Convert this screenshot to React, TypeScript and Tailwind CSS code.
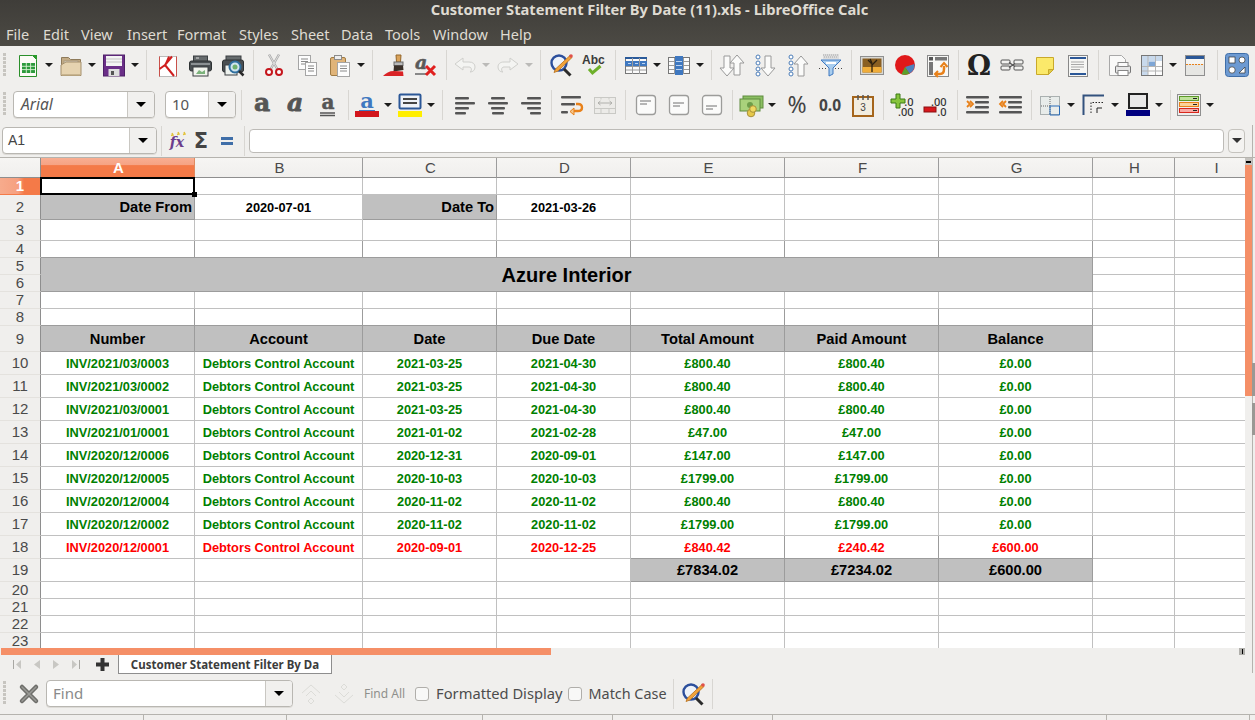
import React from "react";
import clsx from "clsx";

type P = { children?: React.ReactNode };
const Svg = ({ children, w = 24, h = 24 }: P & { w?: number; h?: number }) => (
  <svg className="block overflow-visible" width={w} height={h} viewBox={`0 0 ${w} ${h}`}>
    {children}
  </svg>
);

/* ---------- toolbar 1 icons ---------- */
const NewDoc = () => (
  <Svg>
    <path d="M3.500 2.500h13l4 4v17h-17z" fill="#fbfbf6" stroke="#2a8f2a" />
    <path d="M16 2l5 0 0 5z" fill="#2a9a2a" />
    <rect x="6" y="10" width="13" height="10" fill="#2c9a3c" />
    <path d="M6 13.300h13M6 16.600h13M10.300 10v10M14.600 10v10" stroke="#d9f2d2" strokeWidth=".9" />
  </Svg>
);
const Folder = () => (
  <Svg>
    <path d="M2.500 4.500h7l2 2h10v16h-19z" fill="#c3ab85" stroke="#8e7a5a" />
    <rect x="5" y="8" width="14" height="5" fill="#f6f3ea" stroke="#a79a80" />
    <path d="M2 12l5-3h15v13.500H2z" fill="#e6d3b0" stroke="#a48f6c" />
    <path d="M3 21h18v1.500H3z" fill="#c8b48f" />
  </Svg>
);
const Save = () => (
  <Svg>
    <rect x="1.500" y="2" width="21" height="21" fill="#6b2f88" stroke="#4e2068" />
    <rect x="4" y="3" width="16" height="10" fill="#f4f4f4" />
    <path d="M4 6h16M4 9h16" stroke="#c4c4c4" />
    <rect x="6.500" y="16" width="11" height="7" fill="#dedede" />
    <rect x="9" y="18" width="3" height="4" fill="#555" />
  </Svg>
);
const Pdf = () => (
  <Svg>
    <rect x="4.500" y="3.500" width="17" height="20" fill="#fff" stroke="#bbb" />
    <path d="M4.500 3.500v20M21.500 3.500v20" stroke="#c8504a" />
    <path d="M17 3.500L10 12 4.500 16M10 12l9 11M14 3.500c-2 5-4 9-5 9.500" fill="none" stroke="#cf1f1f" strokeWidth="2" />
  </Svg>
);
const Printer = () => (
  <Svg>
    <rect x="5.500" y="3" width="14" height="6" fill="#666b6d" stroke="#3a3f42" />
    <path d="M8 5h3" stroke="#ddd" />
    <rect x="1.500" y="8" width="22" height="10" rx="2" fill="#4a4f52" stroke="#2d3133" />
    <rect x="5" y="14" width="15" height="9" fill="#f2f4ee" stroke="#3a3f42" />
    <path d="M8 21l3-4 3 2 3-2v4z" fill="#7bb27b" />
    <rect x="3" y="10" width="19" height="2" fill="#8b9093" />
  </Svg>
);
const Preview = () => (
  <Svg>
    <rect x="5" y="3" width="15" height="5" fill="#666b6d" stroke="#3a3f42" />
    <rect x="1.500" y="7" width="21" height="12" rx="2" fill="#4a4f52" stroke="#2d3133" />
    <rect x="4" y="12" width="12" height="10" fill="#eef2ee" stroke="#3a3f42" />
    <circle cx="14" cy="14" r="5.500" fill="#cfe3ee" stroke="#2f6f9f" strokeWidth="2" />
    <circle cx="14" cy="14" r="2.500" fill="#6fb06f" />
    <path d="M18 18l4.500 4.500" stroke="#2a2a2a" strokeWidth="2.500" />
  </Svg>
);
const Cut = () => (
  <Svg>
    <path d="M7 1.500l8 14M17 1.500l-8 14" stroke="#a8a8a8" strokeWidth="2.400" />
    <path d="M7 1.500l8 14M17 1.500l-8 14" stroke="#eee" strokeWidth=".8" />
    <circle cx="7" cy="19" r="3" fill="#fff" stroke="#c5161d" strokeWidth="2" />
    <circle cx="17" cy="19" r="3" fill="#fff" stroke="#c5161d" strokeWidth="2" />
  </Svg>
);
const Copy = () => (
  <Svg>
    <rect x="3.500" y="2.500" width="12" height="14" fill="#fdfdfd" stroke="#a5a5a5" />
    <path d="M6 6h7M6 8.500h7M6 11h7" stroke="#888" />
    <rect x="10.500" y="9.500" width="11" height="13" fill="#fdfdfd" stroke="#a5a5a5" />
    <path d="M13 13h6M13 15.500h6M13 18h6" stroke="#888" />
  </Svg>
);
const Paste = () => (
  <Svg>
    <rect x="2.500" y="4.500" width="15" height="18" rx="1.500" fill="#e0b479" stroke="#a07c45" />
    <rect x="6.500" y="2.500" width="7" height="4" fill="#eee" stroke="#8b8b8b" />
    <rect x="9.500" y="9.500" width="12" height="14" fill="#fdfdfd" stroke="#a5a5a5" />
    <path d="M12 13h7M12 15.500h7M12 18h7" stroke="#8a8a8a" />
  </Svg>
);
const Brush = () => (
  <Svg>
    <path d="M15 2h5l-.5 7h-4z" fill="#d9a25a" stroke="#94662a" />
    <rect x="13" y="9" width="9" height="3.500" fill="#b9b9b9" stroke="#6a6a6a" />
    <path d="M13 12.500h9l.5 4.500-10 1.500z" fill="#3a2f28" />
    <path d="M2 23c3-3 6-5 11-5l9 .5.500 4.500z" fill="#d92326" />
  </Svg>
);
const Clear = () => (
  <Svg>
    <text x="1" y="16" fontFamily="DejaVu Serif" fontWeight="700" fontStyle="italic" fontSize="19" fill="#5a5a5a" stroke="#5a5a5a" strokeWidth=".5">a</text>
    <path d="M1 21h12" stroke="#666" strokeWidth="1.500" />
    <path d="M12 13l9 9M21 13l-9 9" stroke="#e0201f" strokeWidth="3" />
  </Svg>
);
const Undo = () => (
  <Svg>
    <path d="M2 11l8-6v4h6c4 0 6 2 6 5s-2 5-5 5c2-1 2-5-1-5h-6v3z" fill="#f4f4f2" stroke="#cfcfcc" />
  </Svg>
);
const Redo = () => (
  <Svg>
    <path d="M22 11l-8-6v4H8c-4 0-6 2-6 5s2 5 5 5c-2-1-2-5 1-5h6v3z" fill="#f4f4f2" stroke="#cfcfcc" />
  </Svg>
);
const FindIcon = () => (
  <Svg>
    <circle cx="10" cy="10" r="7.500" fill="#eef3fa" stroke="#2c4f9c" strokeWidth="2.400" />
    <path d="M15 16l6.500 6.500" stroke="#2b2b2b" strokeWidth="3" />
    <path d="M21 2.500l2 2L9 18l-4 1.500L6.500 16z" fill="#f2a33a" stroke="#b8701a" strokeWidth=".8" />
    <circle cx="22" cy="3" r="1.800" fill="#e0504a" />
  </Svg>
);
const Spell = () => (
  <Svg>
    <text x="0" y="11" fontFamily="Liberation Sans" fontWeight="700" fontSize="12" fill="#3b3b3b">Abc</text>
    <path d="M7 16l3.500 4 8-7" fill="none" stroke="#6eb02a" strokeWidth="3" />
  </Svg>
);
const TableRow = () => (
  <Svg>
    <rect x="1.500" y="4.500" width="21" height="16" fill="#fbfbfb" stroke="#777" />
    <rect x="1" y="4" width="22" height="2" fill="#2a5a9a" />
    <rect x="1" y="8" width="22" height="5" fill="#3f78c0" />
    <path d="M8.500 5v16M15.500 5v16M2 13.500h20M2 17h20" stroke="#9a9a9a" />
    <path d="M4 10.500h3M11 10.500h3M18 10.500h3" stroke="#bcd4f2" />
  </Svg>
);
const TableCol = () => (
  <Svg>
    <rect x="1.500" y="4.500" width="21" height="16" fill="#fbfbfb" stroke="#777" />
    <path d="M2 8.500h20M2 12.500h20M2 16.500h20M7.500 5v16M16.500 5v16" stroke="#9a9a9a" />
    <rect x="8" y="3" width="8" height="19" fill="#3f78c0" />
    <path d="M9 8.500h6M9 12.500h6M9 16.500h6" stroke="#bcd4f2" />
  </Svg>
);
const arrowDown = "M-3 0h6v12h4l-7 8-7-8h4z";
const Sort = () => (
  <Svg>
    <path d={arrowDown} transform="translate(7 3)" fill="#fbfbfa" stroke="#999" />
    <path d={arrowDown} transform="translate(17 22) scale(1 -1)" fill="#fbfbfa" stroke="#999" />
  </Svg>
);
const Dots = () => (
  <g fill="#fff" stroke="#4a7cb8">
    <circle cx="5" cy="4" r="2" />
    <circle cx="5" cy="10" r="2" />
    <circle cx="5" cy="16" r="2" />
    <circle cx="5" cy="21" r="2" />
  </g>
);
const SortDesc = () => (
  <Svg>
    <Dots />
    <path d={arrowDown} transform="translate(15 3)" fill="#fbfbfa" stroke="#999" />
  </Svg>
);
const SortAsc = () => (
  <Svg>
    <Dots />
    <path d={arrowDown} transform="translate(15 23) scale(1 -1)" fill="#fbfbfa" stroke="#999" />
  </Svg>
);
const Filter = () => (
  <Svg>
    <path d="M4 1h16v5H4z" fill="#d8d8d8" opacity=".8" />
    <path d="M4 2h16M5 4h14" stroke="#aaa" strokeDasharray="1 1" />
    <path d="M2 7h20l-8 8v6l-4 2v-8z" fill="#a9cdee" stroke="#3f78c0" />
    <path d="M7 10h10" stroke="#fff" strokeWidth="2" />
    <path d="M0 15.500h8M16 15.500h8" stroke="#444" strokeDasharray="1 2" />
  </Svg>
);
const ImageIcon = () => (
  <Svg>
    <rect x="0.500" y="3.500" width="23" height="18" fill="#d8d8d4" stroke="#8f8f8f" />
    <rect x="2.500" y="5.500" width="19" height="14" fill="#8a5f22" />
    <rect x="2.500" y="14" width="19" height="5.500" fill="#f0ad3a" />
    <path d="M12 19V11L8 7M12 12l5-5M12 10l-2-4" stroke="#2b2010" strokeWidth="1.300" fill="none" />
  </Svg>
);
const Chart = () => (
  <Svg>
    <circle cx="12" cy="12" r="10" fill="#e0191a" />
    <path d="M12 14l9.500-3a10 10 0 0 1-5 9.500z" fill="#4f81bd" />
    <path d="M12 14l4.500 6.500a10 10 0 0 1-8 .8z" fill="#5aa02c" />
  </Svg>
);
const Pivot = () => (
  <Svg>
    <rect x="1.500" y="2.500" width="21" height="21" fill="#f8f8f6" stroke="#8a8a8a" />
    <rect x="3" y="4" width="4" height="3.500" fill="#555" />
    <rect x="9" y="4" width="12" height="3.500" fill="#777" />
    <rect x="3" y="9" width="4" height="13" fill="#777" />
    <path d="M10 21h4c3 0 4-2 4-5v-3" fill="none" stroke="#e8811a" strokeWidth="2.500" />
    <path d="M14.500 14l3.500-4 3.500 4M12 18l-3 3 3 3" fill="none" stroke="#e8811a" strokeWidth="2" />
  </Svg>
);
const Omega = () => (
  <Svg w={28}>
    <text x="14" y="22" textAnchor="middle" fontFamily="DejaVu Serif" fontWeight="700" fontSize="27" fill="#222">Ω</text>
  </Svg>
);
const LinkIcon = () => (
  <Svg>
    <rect x="1" y="7" width="9" height="4" rx="1" fill="#f2f2f0" stroke="#555" />
    <rect x="14" y="7" width="9" height="4" rx="1" fill="#f2f2f0" stroke="#555" />
    <rect x="1" y="13" width="9" height="4" rx="1" fill="#f2f2f0" stroke="#555" />
    <rect x="14" y="13" width="9" height="4" rx="1" fill="#f2f2f0" stroke="#555" />
    <path d="M9 9.500l6 4M9 14.500l6-4" stroke="#555" strokeWidth="1.500" />
  </Svg>
);
const Note = () => (
  <Svg>
    <path d="M3.500 4.500h17v12l-5 5h-12z" fill="#fbe96a" stroke="#c9a92a" />
    <path d="M15.500 21.500v-5h5z" fill="#dfcb4a" stroke="#c9a92a" />
  </Svg>
);
const HeaderDoc = () => (
  <Svg>
    <rect x="2.500" y="2.500" width="19" height="21" fill="#f6f6f4" stroke="#888" />
    <rect x="4" y="4" width="16" height="2" fill="#2b5797" />
    <rect x="4" y="20" width="16" height="2" fill="#2b5797" />
    <path d="M5 9h13M5 11.500h13M5 14h13M5 16.500h9" stroke="#a8a8a8" />
  </Svg>
);
const PrintArea = () => (
  <Svg>
    <path d="M2.500 2.500h12l4 4v16h-16z" fill="#f9f9f8" stroke="#a8a8a8" />
    <rect x="8.500" y="13" width="15" height="7" rx="1" fill="#e6e6e6" stroke="#777" />
    <rect x="11" y="9.500" width="10" height="4" fill="#fafafa" stroke="#888" />
    <rect x="11" y="17.500" width="10" height="5" fill="#fff" stroke="#888" />
  </Svg>
);
const Freeze = () => (
  <Svg>
    <rect x="1.500" y="2.500" width="21" height="20" fill="#fdfdfd" stroke="#777" />
    <rect x="2" y="3" width="20" height="5" fill="#c8d9ec" />
    <rect x="2" y="3" width="6" height="19" fill="#c8d9ec" />
    <rect x="8.500" y="8.500" width="7" height="5" fill="#7ea6d6" />
    <path d="M2 13.500h20M2 18h20M8 3v19M15.500 3v19" stroke="#b5b5b5" />
  </Svg>
);
const Split = () => (
  <Svg>
    <rect x="2.500" y="2.500" width="19" height="20" fill="#e6e6e3" stroke="#8f8f8f" />
    <rect x="3" y="3" width="18" height="3" fill="#2b5797" />
    <rect x="3" y="6" width="18" height="5" fill="#f4f4f2" />
    <path d="M3 11.500h18" stroke="#e8811a" strokeDasharray="2 1" />
  </Svg>
);
const Shapes = () => (
  <Svg>
    <rect x="0.500" y="0.500" width="23" height="23" rx="3" fill="#6d9ad2" stroke="#3f6ea8" />
    <rect x="4" y="4" width="6" height="6" fill="#fff" stroke="#333" strokeWidth=".7" />
    <circle cx="17" cy="7" r="3" fill="#fff" stroke="#333" strokeWidth=".7" />
    <circle cx="7" cy="17" r="3.200" fill="#fff" stroke="#333" strokeWidth=".7" />
    <path d="M14 20l6-6v6z" fill="#fff" stroke="#333" strokeWidth=".7" />
  </Svg>
);

/* ---------- toolbar 2 icons ---------- */
const LetterA = ({ italic, under, fill = "#555" }: { italic?: boolean; under?: boolean; fill?: string }) => (
  <Svg>
    <text x="12" y={under ? 16 : 18} textAnchor="middle" fontFamily="DejaVu Serif" fontWeight="700" fontStyle={italic ? "italic" : "normal"} fontSize={under ? 20 : 25} fill={fill} stroke={fill} strokeWidth={under ? 0.5 : 0.8}>a</text>
    {under && <path d="M4 20h15M4 22.500h15" stroke="#555" strokeWidth="1.300" />}
  </Svg>
);
const FontColor = () => (
  <Svg>
    <text x="12" y="15" textAnchor="middle" fontFamily="DejaVu Serif" fontWeight="700" fontSize="21" fill="#3f78c0">a</text>
    <path d="M4 17.500h16" stroke="#3f78c0" />
    <rect x="0" y="18" width="24" height="6" fill="#d2161c" />
  </Svg>
);
const BgColor = () => (
  <Svg>
    <rect x="1.500" y="1.500" width="21" height="14" rx="1" fill="#eef2f7" stroke="#2b5797" strokeWidth="2" />
    <path d="M5 6h14M5 10h14" stroke="#444" strokeWidth="2" />
    <rect x="0" y="18" width="24" height="6" fill="#ffee00" />
  </Svg>
);
const lines = (pos: number[][]) =>
  pos.map((p, i) => <rect key={i} x={p[0]} y={p[1]} width={p[2]} height="2.400" rx="1" fill="#555" />);
const AlignL = () => <Svg>{lines([[2, 4, 14], [2, 9, 20], [2, 14, 14], [2, 19, 11]])}</Svg>;
const AlignC = () => <Svg>{lines([[5, 4, 14], [2, 9, 20], [5, 14, 14], [6, 19, 12]])}</Svg>;
const AlignR = () => <Svg>{lines([[8, 4, 14], [2, 9, 20], [8, 14, 14], [11, 19, 11]])}</Svg>;
const Wrap = () => (
  <Svg>
    {lines([[1, 3, 20], [1, 10, 14], [1, 18, 7]])}
    <path d="M13 18h5c3 0 4-2 4-3.500S21 11 18 11h-2" fill="none" stroke="#e8811a" strokeWidth="2.400" />
    <path d="M14 15l-4 3.500 4 3.500z" fill="#f4c58a" stroke="#e8811a" />
  </Svg>
);
const Merge = () => (
  <Svg>
    <rect x="1.500" y="4.500" width="21" height="16" fill="#ecebe8" stroke="#c9c9c5" />
    <path d="M1.500 15.500h21M8 16v5M16 16v5M8 4.500v2M16 4.500v2" stroke="#c9c9c5" />
    <path d="M5 10h14M5 10l2.500-2M5 10l2.500 2M19 10l-2.500-2M19 10l-2.500 2" stroke="#b0b0ac" fill="none" />
  </Svg>
);
const VBox = ({ y }: { y: number }) => (
  <Svg>
    <rect x="2.500" y="2.500" width="19" height="19" rx="3" fill="#fbfbfa" stroke="#9c9c9a" strokeWidth="1.300" />
    <path d={`M6 ${y}h11M6 ${y + 3}h7`} stroke="#707070" />
  </Svg>
);
const Currency = () => (
  <Svg>
    <rect x="4" y="3" width="20" height="12" fill="#8bbf62" stroke="#5e8c3e" />
    <rect x="1" y="6" width="20" height="12" fill="#a9d27c" stroke="#5e8c3e" />
    <circle cx="11" cy="12" r="3" fill="#6e9e4a" />
    <circle cx="12" cy="20" r="3.800" fill="#e6c84a" stroke="#a8903a" />
    <circle cx="14" cy="16" r="3.300" fill="#f0d860" stroke="#a8903a" />
  </Svg>
);
const Percent = () => (
  <Svg>
    <text x="12" y="20" textAnchor="middle" fontFamily="Noto Sans" fontSize="23" fill="#444">%</text>
  </Svg>
);
const Zero = () => (
  <Svg w={28}>
    <text x="14" y="18" textAnchor="middle" fontFamily="Noto Sans" fontWeight="700" fontSize="15.500" fill="#444">0.0</text>
  </Svg>
);
const DateIcon = () => (
  <Svg>
    <rect x="2" y="4" width="20" height="19" fill="#f2ede0" stroke="#a5651c" strokeWidth="2" />
    <path d="M7 2v5M12 2v5M17 2v5" stroke="#555" strokeWidth="1.500" />
    <text x="12" y="18" textAnchor="middle" fontFamily="Liberation Sans" fontSize="10" fill="#444">3</text>
  </Svg>
);
const Decimals = ({ top, bottom, children }: P & { top: string; bottom: string }) => (
  <div className="relative h-[24px] w-[24px]">
    <Svg>{children}</Svg>
    <div className="absolute top-[4px] right-0 flex flex-col items-end text-[11px] leading-[10px] font-medium text-[#333]">
      <span>{top}</span>
      <span>{bottom}</span>
    </div>
  </div>
);
const AddDec = () => (
  <Decimals top=".0" bottom=".00">
    <path d="M6 1h4v5h5v4h-5v5H6v-5H1V6h5z" fill="#86c43c" stroke="#3a7a14" />
  </Decimals>
);
const DelDec = () => (
  <Decimals top=".00" bottom=".0">
    <rect x="1" y="14" width="12" height="5" fill="#d8181c" stroke="#8a1012" />
  </Decimals>
);
const Indent = () => (
  <Svg>
    {lines([[0, 3, 23], [9, 8, 14], [9, 13, 14], [0, 18, 23]])}
    <path d="M1 8l3 3-3 3M4 8l3 3-3 3" fill="none" stroke="#e8811a" strokeWidth="1.800" />
  </Svg>
);
const Outdent = () => (
  <Svg>
    {lines([[0, 3, 23], [9, 8, 14], [9, 13, 14], [0, 18, 23]])}
    <path d="M4 8l-3 3 3 3M7 8l-3 3 3 3" fill="none" stroke="#e8811a" strokeWidth="1.800" />
  </Svg>
);
const Borders = () => (
  <Svg>
    <rect x="2.500" y="3.500" width="19" height="18" fill="#e8ecea" stroke="#aab0b0" />
    <path d="M12 4v17" stroke="#666" strokeDasharray="1 1" />
    <path d="M3 13h9" stroke="#666" strokeDasharray="1 1" />
    <path d="M12 13v9M12 13h9.500v9H12" stroke="#2b6cb8" fill="none" />
  </Svg>
);
const BorderStyle = () => (
  <Svg>
    <path d="M1.500 22V2.500H22" fill="none" stroke="#33527e" strokeWidth="2" />
    <path d="M9 20V9.500h12" fill="none" stroke="#222" strokeDasharray="1.500 1.500" />
    <path d="M15 20v-5h5" fill="none" stroke="#222" />
  </Svg>
);
const BorderColor = () => (
  <Svg>
    <rect x="3" y="1" width="18" height="14" fill="#e8e8e8" stroke="#222" strokeWidth="2" />
    <rect x="0" y="17" width="24" height="6" fill="#00007f" />
  </Svg>
);
const Cond = () => (
  <Svg>
    <rect x="0.500" y="1.500" width="23" height="21" fill="#eee" stroke="#8f8f8f" />
    <rect x="2.500" y="3.500" width="19" height="4" fill="#bfe29a" stroke="#5e9a2a" />
    <rect x="2.500" y="9.500" width="19" height="4" fill="#fbd29a" stroke="#e8811a" />
    <rect x="2.500" y="15.500" width="19" height="4" fill="#f8a9a4" stroke="#d8281c" />
    <path d="M16 5.500h4M16 11.500h4M16 17.500h4" stroke="#222" />
  </Svg>
);

/* ---------- formula / find icons ---------- */
const Fx = () => (
  <Svg>
    <text x="12" y="18" textAnchor="middle" fontFamily="DejaVu Serif" fontWeight="700" fontStyle="italic" fontSize="14" fill="#6b3d8c">fx</text>
    <path d="M7 4l1 2-2 .5M13 3l1 2-2 .5M19 3l1 2-2 .5" stroke="#e2c23a" strokeWidth="1.500" fill="none" />
  </Svg>
);
const Sigma = () => (
  <Svg>
    <text x="12" y="19" textAnchor="middle" fontFamily="DejaVu Sans" fontWeight="700" fontSize="21" fill="#444">Σ</text>
  </Svg>
);
const Equal = () => (
  <Svg>
    <rect x="6" y="8" width="12" height="3" fill="#3f6ea8" />
    <rect x="6" y="13" width="12" height="3" fill="#3f6ea8" />
  </Svg>
);
const CloseX = () => (
  <Svg>
    <path d="M5 5l14 14M19 5L5 19" stroke="#6e6e6a" strokeWidth="4.500" strokeLinecap="round" />
    <path d="M5 5l14 14M19 5L5 19" stroke="#9a9a96" strokeWidth="1.500" strokeLinecap="round" />
  </Svg>
);
const FindUp = () => (
  <Svg>
    <g fill="none" stroke="#dcdcd8">
      <path d="M3 11l9-8 9 8M7 14l5-5 5 5M9 19l3-3 3 3 -3 3z" />
    </g>
  </Svg>
);
const FindDown = () => (
  <Svg>
    <g fill="none" stroke="#dcdcd8">
      <path d="M3 13l9 8 9-8M7 10l5 5 5-5M9 5l3 3 3-3 -3-3z" />
    </g>
  </Svg>
);

/* ---------- layout helpers ---------- */
const Grip = () => (
  <div className="flex h-[25px] w-[10px] shrink-0 flex-col gap-px pl-[3px]">
    {Array.from({ length: 6 }).map((_, i) => (
      <div key={i} className="h-[3px] w-[3px] bg-[#c7c5c0]" />
    ))}
  </div>
);
const Ic = ({ children, className }: P & { className?: string }) => (
  <div className={clsx("flex w-[33px] shrink-0 items-center justify-center", className)}>{children}</div>
);
const Tri = ({ className }: { className?: string }) => (
  <div className={clsx("h-0 w-0 border-x-[4px] border-t-[4px] border-x-transparent border-t-[#1c1c1c]", className)} />
);
const Ar = ({ className, dim }: { className?: string; dim?: boolean }) => (
  <div className={clsx("flex w-[10px] shrink-0 justify-center", className)}>
    <Tri className={dim ? "opacity-25" : ""} />
  </div>
);
const Sep = ({ className }: { className?: string }) => (
  <div className={clsx("flex h-[30px] w-[8px] shrink-0 justify-center", className)}>
    <div className="h-full w-px bg-[#d8d6d2]" />
  </div>
);
const Combo = ({ className, btn, text, textClass }: { className: string; btn: string; text: string; textClass: string }) => (
  <div className={clsx("flex shrink-0 overflow-hidden rounded-[4px] border border-[#b9b7b2] bg-white shadow-[0_1px_0_#dddbd7]", className)}>
    <div className={clsx("flex min-w-0 flex-1 items-center", textClass)}>{text}</div>
    <div className={clsx("flex items-center justify-center border-l border-[#c9c7c2] bg-[#f1f0ee]", btn)}>
      <div className="h-0 w-0 border-x-[5px] border-t-[5px] border-x-transparent border-t-black" />
    </div>
  </div>
);

const Toolbar1 = () => (
  <div className="flex h-[40px] items-center pb-[2px]">
    <div className="flex w-[11px] shrink-0"><Grip /></div>
    <Ic><NewDoc /></Ic><Ar /><Ic><Folder /></Ic><Ar /><Ic><Save /></Ic><Ar /><Sep className="ml-[2px]" />
    <Ic><Pdf /></Ic><Ic><Printer /></Ic><Ic><Preview /></Ic><Sep />
    <Ic><Cut /></Ic><Ic><Copy /></Ic><Ic><Paste /></Ic><Ar /><Sep className="ml-[2px]" />
    <Ic><Brush /></Ic><Ic><Clear /></Ic><Sep />
    <Ic className="-ml-[2px]"><Undo /></Ic><Ar dim /><Ic><Redo /></Ic><Ar dim /><Sep className="ml-[2px]" />
    <Ic><FindIcon /></Ic><Ic><Spell /></Ic><Sep className="ml-[1px]" />
    <Ic><TableRow /></Ic><Ar /><Ic><TableCol /></Ic><Ar /><Sep className="ml-[2px]" />
    <Ic><Sort /></Ic><Ic><SortDesc /></Ic><Ic><SortAsc /></Ic><Ic><Filter /></Ic><Sep />
    <Ic><ImageIcon /></Ic><Ic><Chart /></Ic><Ic><Pivot /></Ic><Sep />
    <Ic><Omega /></Ic><Ic><LinkIcon /></Ic><Ic><Note /></Ic><Ic><HeaderDoc /></Ic><Sep />
    <Ic><PrintArea /></Ic><Ic><Freeze /></Ic><Ar /><Ic><Split /></Ic><Sep className="ml-[2px]" />
    <Ic className="-ml-[1px]"><Shapes /></Ic>
  </div>
);

const Toolbar2 = () => (
  <div className="flex h-[38px] items-center pb-px">
    <div className="flex w-[13px] shrink-0"><Grip /></div>
    <Combo className="h-[27px] w-[142px]" btn="w-[27px]" text="Arial" textClass={`pl-[7px] text-[15.500px] italic text-[#555] [font-family:"Noto_Sans",sans-serif]`} />
    <Combo className="ml-[10px] h-[27px] w-[71px]" btn="w-[27px]" text="10" textClass={`pl-[6px] text-[15px] text-[#555] [font-family:"Noto_Sans",sans-serif]`} />
    <Sep className="ml-[1px]" />
    <Ic><LetterA /></Ic><Ic><LetterA italic /></Ic><Ic><LetterA under /></Ic><Sep />
    <Ic className="-ml-[2px]"><FontColor /></Ic><Ar /><Ic><BgColor /></Ic><Ar /><Sep className="ml-[2px]" />
    <Ic className="ml-[2px]"><AlignL /></Ic><Ic><AlignC /></Ic><Ic><AlignR /></Ic><Sep />
    <Ic><Wrap /></Ic><Ic><Merge /></Ic><Sep />
    <Ic><VBox y={8} /></Ic><Ic><VBox y={10} /></Ic><Ic><VBox y={13} /></Ic><Sep />
    <Ic className="-ml-[2px]"><Currency /></Ic><Ar /><Ic className="ml-[3px]"><Percent /></Ic><Ic><Zero /></Ic><Ic><DateIcon /></Ic><Sep />
    <Ic className="-ml-[2px]"><AddDec /></Ic><Ic><DelDec /></Ic><Sep className="ml-[2px]" />
    <Ic><Indent /></Ic><Ic><Outdent /></Ic><Sep />
    <Ic className="-ml-[2px]"><Borders /></Ic><Ar /><Ic className="ml-[1px]"><BorderStyle /></Ic><Ar /><Ic className="ml-[1px]"><BorderColor /></Ic><Ar /><Sep className="ml-[2px]" />
    <Ic className="-ml-[2px]"><Cond /></Ic><Ar />
  </div>
);

const FormulaBar = () => (
  <div className="flex h-[34px] items-center border-b border-[#b5b3ae] pl-[2px]">
    <Combo className="h-[27px] w-[155px]" btn="w-[27px]" text="A1" textClass={`pl-[5px] text-[14px] text-[#444] [font-family:"Liberation_Sans",sans-serif]`} />
    <Sep />
    <div className="flex w-[24px] justify-center"><Fx /></div>
    <div className="flex w-[24px] justify-center"><Sigma /></div>
    <div className="ml-[2px] flex w-[24px] justify-center"><Equal /></div>
    <Sep className="ml-[1px]" />
    <div className="ml-px h-[24px] w-[975px] rounded-[4px] border border-[#bdbbb7] bg-white" />
    <div className="ml-[4px] flex h-[24px] w-[17px] items-center justify-center rounded-[4px] border border-[#c5c3be] bg-[#f4f3f1]">
      <div className="h-0 w-0 border-x-[5px] border-t-[5px] border-x-transparent border-t-[#333]" />
    </div>
  </div>
);

/* ---------- sheet ---------- */
type CellProps = P & { gray?: boolean; dark?: boolean; className?: string };
const Cell = ({ children, gray, dark, className }: CellProps) => (
  <div
    className={clsx(
      "flex min-w-0 items-center justify-center overflow-hidden whitespace-nowrap border-r border-b font-bold",
      gray && "bg-[#c0c0c0]",
      dark || gray ? "border-[#9c9c9c]" : "border-[#c0c0c0]",
      className
    )}
  >
    {children}
  </div>
);
const RowHead = ({ n, active }: { n: number; active?: boolean }) => (
  <div
    className={clsx(
      "flex items-center justify-center border-r border-b border-r-[#8e8e8e] pt-px text-[15px]",
      active
        ? "border-b-[#f47a48] bg-[linear-gradient(90deg,#f7ab8c_0%,#f6a080_45%,#f47a48_60%,#f47a48_100%)] font-bold text-white"
        : "border-b-[#e4e2de] bg-[#f0efed] text-[#4a4a4a]"
    )}
  >
    {n}
  </div>
);
const ColHead = ({ c, active }: { c: string; active?: boolean }) => (
  <div
    className={clsx(
      "flex items-center justify-center border-r border-b pt-px pl-[2px] text-[15px]",
      active
        ? "border-b-[#c86a3c] border-r-[#e08a60] bg-[linear-gradient(#f8ae92_0%,#f6a384_35%,#f47a48_40%,#f47a48_100%)] font-bold text-white"
        : "border-b-[#8e8e8e] border-r-[#9c9c9c] bg-[linear-gradient(#f6f5f3,#f0efed)] text-[#4a4a4a]"
    )}
  >
    {c}
  </div>
);

const green = "text-[#008000]";
const red = "text-[#ff0000]";
const data: string[][] = [
  ["INV/2021/03/0003", "2021-03-25", "2021-04-30", "£800.40", "£800.40", "£0.00"],
  ["INV/2021/03/0002", "2021-03-25", "2021-04-30", "£800.40", "£800.40", "£0.00"],
  ["INV/2021/03/0001", "2021-03-25", "2021-04-30", "£800.40", "£800.40", "£0.00"],
  ["INV/2021/01/0001", "2021-01-02", "2021-02-28", "£47.00", "£47.00", "£0.00"],
  ["INV/2020/12/0006", "2020-12-31", "2020-09-01", "£147.00", "£147.00", "£0.00"],
  ["INV/2020/12/0005", "2020-10-03", "2020-10-03", "£1799.00", "£1799.00", "£0.00"],
  ["INV/2020/12/0004", "2020-11-02", "2020-11-02", "£800.40", "£800.40", "£0.00"],
  ["INV/2020/12/0002", "2020-11-02", "2020-11-02", "£1799.00", "£1799.00", "£0.00"],
  ["INV/2020/12/0001", "2020-09-01", "2020-12-25", "£840.42", "£240.42", "£600.00"],
];
const Blank = ({ n = 1, dark }: { n?: number; dark?: boolean }) => (
  <>
    {Array.from({ length: n }).map((_, i) => (
      <Cell key={i} dark={dark} />
    ))}
  </>
);
const data12 = "pt-[2px] text-[12.800px]";
const head = "text-[14.670px] text-black";

const Sheet = () => (
  <div className={`grid h-[490px] w-[1245px] grid-cols-[41px_154px_168px_134px_134px_154px_154px_154px_82px_82px] grid-rows-[20px_17px_25px_21px_17px_17px_17px_17px_17px_26px_23px_23px_23px_23px_23px_23px_23px_23px_23px_23px_17px_17px_17px_17px] overflow-hidden bg-white [font-family:"Liberation_Sans",Arial,sans-serif]`}>
    <div className="border-r border-b border-r-[#8e8e8e] border-b-[#8e8e8e] bg-[linear-gradient(#f6f5f3,#f0efed)]" />
    {["A", "B", "C", "D", "E", "F", "G", "H", "I"].map((c) => (
      <ColHead key={c} c={c} active={c === "A"} />
    ))}

    <RowHead n={1} active />
    <div className="relative border-r border-b border-[#c0c0c0]">
      <div className="absolute -top-px -left-px -right-px -bottom-px border-2 border-black" />
      <div className="absolute -right-[3px] -bottom-[3px] h-[5px] w-[5px] bg-black" />
    </div>
    <Blank n={8} />

    <RowHead n={2} />
    <Cell gray className={`justify-end pr-[2px] ${head}`}>Date From</Cell>
    <Cell className={`${data12} text-black`}>2020-07-01</Cell>
    <Cell gray className={`justify-end pr-[2px] ${head}`}>Date To</Cell>
    <Cell className={`${data12} text-black`}>2021-03-26</Cell>
    <Blank n={5} />

    <RowHead n={3} />
    <Blank n={9} />

    <RowHead n={4} />
    <Blank n={7} dark />
    <Blank n={2} />

    <RowHead n={5} />
    <Cell gray className="col-span-7 row-span-2 text-[20px] text-black">Azure Interior</Cell>
    <Blank n={2} />

    <RowHead n={6} />
    <Blank n={2} />

    <RowHead n={7} />
    <Blank n={9} />

    <RowHead n={8} />
    <Blank n={7} dark />
    <Blank n={2} />

    <RowHead n={9} />
    {["Number", "Account", "Date", "Due Date", "Total Amount", "Paid Amount", "Balance"].map((t) => (
      <Cell key={t} gray className={head}>{t}</Cell>
    ))}
    <Blank n={2} />

    {data.map((r, i) => {
      const cls = clsx(data12, i === 8 ? red : green);
      return (
        <React.Fragment key={r[0]}>
          <RowHead n={10 + i} />
          <Cell className={cls}>{r[0]}</Cell>
          <Cell className={cls}>Debtors Control Account</Cell>
          <Cell className={cls}>{r[1]}</Cell>
          <Cell className={cls}>{r[2]}</Cell>
          <Cell dark={i === 8} className={cls}>{r[3]}</Cell>
          <Cell dark={i === 8} className={cls}>{r[4]}</Cell>
          <Cell dark={i === 8} className={cls}>{r[5]}</Cell>
          <Blank n={2} />
        </React.Fragment>
      );
    })}

    <RowHead n={19} />
    <Blank n={4} />
    <Cell gray className={head}>£7834.02</Cell>
    <Cell gray className={head}>£7234.02</Cell>
    <Cell gray className={head}>£600.00</Cell>
    <Blank n={2} />

    {[20, 21, 22, 23].map((n) => (
      <React.Fragment key={n}>
        <RowHead n={n} />
        <Blank n={9} />
      </React.Fragment>
    ))}
  </div>
);

const VScroll = () => (
  <div className="flex h-[490px] w-[10px] flex-col">
    <div className="flex h-[7px] w-[7px] items-center justify-center bg-[#c4c2be]">
      <div className="h-[2px] w-[5px] bg-black" />
    </div>
    <div className="h-[231px] w-[7px] bg-[#f58f67]" />
  </div>
);

const HBar = () => (
  <div className="flex h-[7px] w-[1245px] items-stretch pl-px">
    <div className="w-[550px] bg-[#f58f67]" />
    <div className="ml-auto flex w-[6px] items-center justify-center bg-[#b0afab]">
      <div className="h-[5px] w-[1px] bg-black" />
    </div>
  </div>
);

const NavTri = ({ dir, bar }: { dir: "l" | "r"; bar?: boolean }) => (
  <svg className="block" width="10" height="11" viewBox="0 0 10 11">
    {dir === "l" ? <path d={bar ? "M9 1v9L4 5.500z" : "M8 1v9L2 5.500z"} fill="#c8c7c3" /> : <path d={bar ? "M1 1v9l5-4.500z" : "M2 1v9l6-4.500z"} fill="#c8c7c3" />}
    {bar && <path d={dir === "l" ? "M1.500 1v9" : "M8.500 1v9"} stroke="#a8a7a3" />}
  </svg>
);

const TabBar = () => (
  <div className={`flex h-[20px] items-start pl-[12px] [font-family:"Noto_Sans",sans-serif]`}>
    <div className="flex h-[19px] w-[70px] items-center gap-[9.500px]">
      <NavTri dir="l" bar />
      <NavTri dir="l" />
      <NavTri dir="r" />
      <NavTri dir="r" bar />
    </div>
    <div className="flex h-[19px] w-[36px] items-center justify-center pl-[4px]">
      <svg className="block" width="13" height="13" viewBox="0 0 13 13">
        <path d="M4.500 0h4v4.500H13v4H8.500V13h-4V8.500H0v-4h4.500z" fill="#333" />
      </svg>
    </div>
    <div className="flex h-[19px] w-[214px] items-center justify-center border-x border-b border-[#8e8e8e] bg-white pt-[2px] text-[11.500px] font-bold text-[#3c3c3c]">
      Customer Statement Filter By Da
    </div>
  </div>
);

const Check = ({ className }: { className?: string }) => (
  <div className={clsx("h-[14px] w-[14px] shrink-0 rounded-[3px] border border-[#b0aeaa] bg-[#f8f8f7]", className)} />
);

const FindBar = () => (
  <div className={`flex h-[39px] items-center pb-[2px] [font-family:"Noto_Sans",sans-serif]`}>
    <div className="flex w-[12px] shrink-0"><Grip /></div>
    <div className="flex w-[34px] shrink-0 justify-center"><CloseX /></div>
    <Combo className="h-[27px] w-[247px]" btn="w-[27px]" text="Find" textClass="pl-[6px] text-[15px] text-[#8a8a8a]" />
    <Ic className="ml-[1px]"><FindUp /></Ic>
    <Ic><FindDown /></Ic>
    <span className="ml-[4px] whitespace-nowrap text-[12px] text-[#8f8f8c]">Find All</span>
    <Check className="ml-[10px]" />
    <span className="ml-[7px] whitespace-nowrap text-[14.700px] text-[#4c4c4c]">Formatted Display</span>
    <Check className="ml-[5px]" />
    <span className="ml-[7px] whitespace-nowrap text-[14.400px] text-[#4c4c4c]">Match Case</span>
    <Sep className="ml-[3px]" />
    <Ic className="-ml-[1px]"><FindIcon /></Ic>
    <Sep className="-ml-[1px]" />
  </div>
);

const StatusBar = () => (
  <div className="grid h-[6px] grid-cols-[144px_143px_196px_130px_160px_334px_143px] border-t border-[#b5b3ae]">
    {[0, 1, 2, 3, 4, 5, 6].map((i) => (
      <div key={i} className="border-r border-[#b5b3ae]" />
    ))}
  </div>
);

const menu: [string, string][] = [
  ["File", "w-[37px]"],
  ["Edit", "w-[38px]"],
  ["View", "w-[46px]"],
  ["Insert", "w-[50px]"],
  ["Format", "w-[62px]"],
  ["Styles", "w-[52px]"],
  ["Sheet", "w-[50px]"],
  ["Data", "w-[44px]"],
  ["Tools", "w-[48px]"],
  ["Window", "w-[67px]"],
  ["Help", "w-[40px]"],
];

export default function App() {
  return (
    <div className={`relative flex h-[720px] w-[1255px] flex-col overflow-hidden bg-[#f0efed] [font-family:"Noto_Sans",sans-serif]`}>
      <div className="flex h-[46px] flex-col bg-[linear-gradient(#3f3d39,#4c4a44)]">
        <div className="flex h-[22px] items-center justify-center pt-[2px] pb-[6px] pl-[44px] text-[14.700px] leading-none font-bold text-[#dfdbd2]">
          Customer Statement Filter By Date (11).xls - LibreOffice Calc
        </div>
        <div className="flex h-[24px] items-center pl-[6px] text-[14.500px] leading-none text-[#dfdbd2]">
          {menu.map(([m, w]) => (
            <span key={m} className={w}>{m}</span>
          ))}
        </div>
      </div>
      <Toolbar1 />
      <Toolbar2 />
      <FormulaBar />
      <div className="flex">
        <Sheet />
        <VScroll />
      </div>
      <HBar />
      <TabBar />
      <FindBar />
      <StatusBar />
      <div className="absolute top-[125px] left-[1252px] h-[548px] w-px bg-[#b5b3ae]" />
      <div className="absolute top-[363px] left-[1252px] h-[33px] w-[3px] bg-[#9a9894]" />
      <div className="absolute top-[403px] left-[1252px] h-[32px] w-[3px] bg-[#9a9894]" />
    </div>
  );
}
